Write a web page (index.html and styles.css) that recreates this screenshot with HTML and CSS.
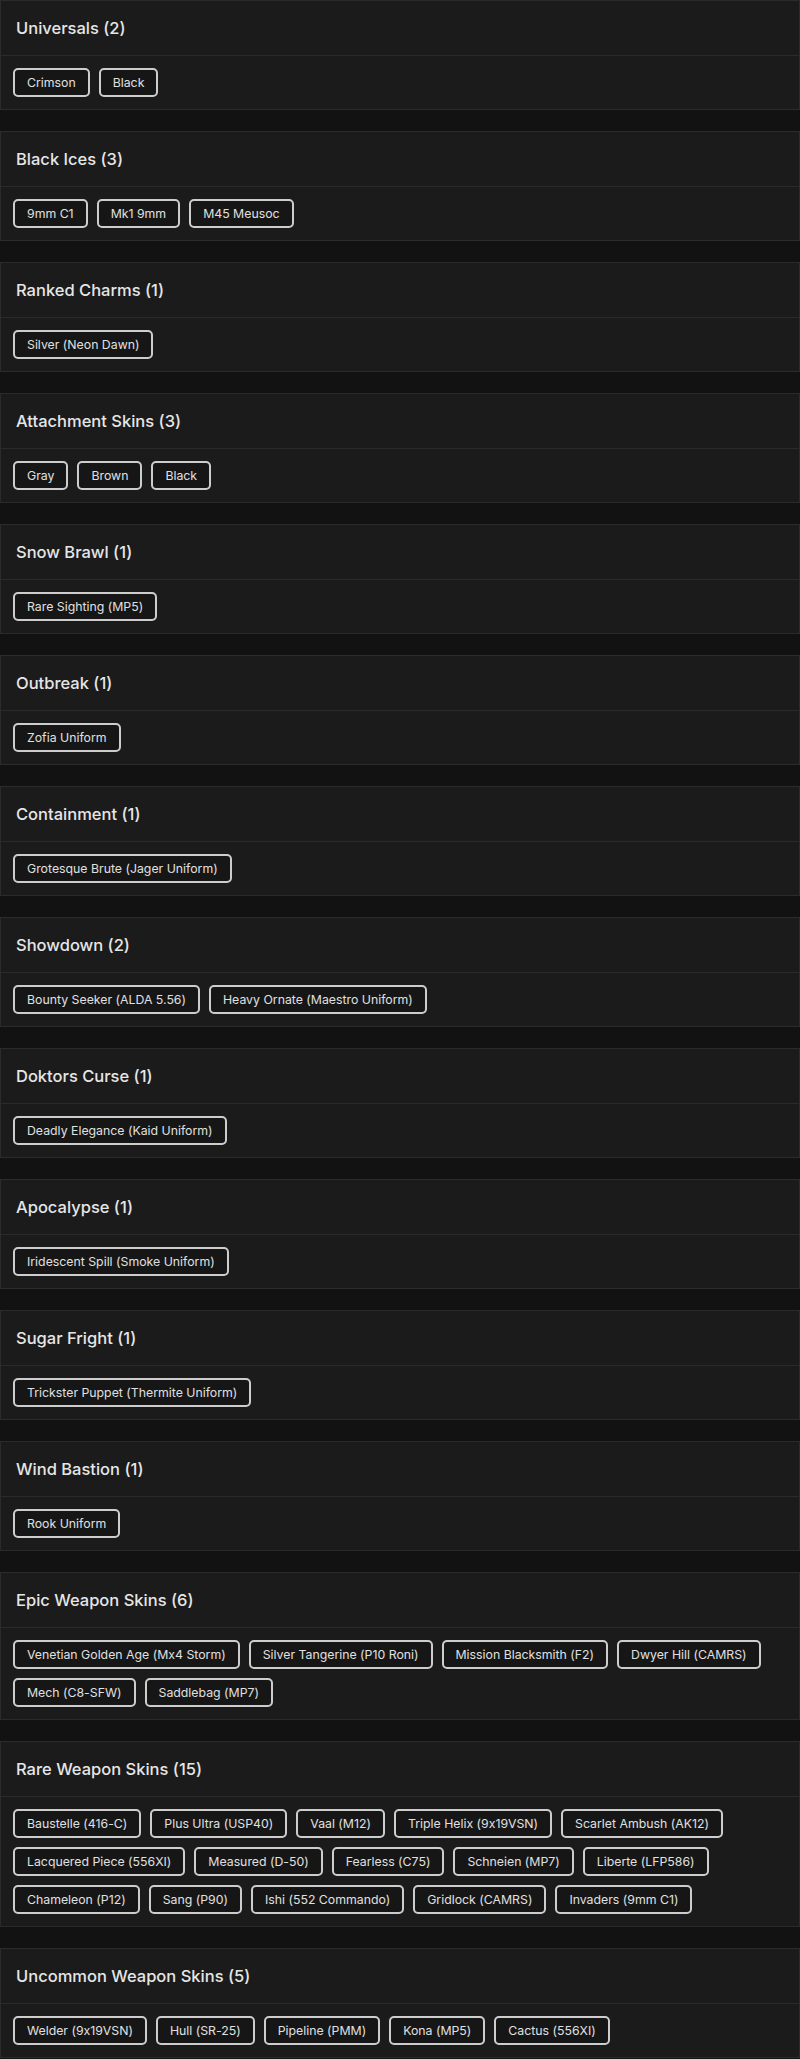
FILE: index.html
```html
<!DOCTYPE html>
<html lang="en">
<head>
<meta charset="utf-8">
<title>Collection</title>
<link rel="stylesheet" href="styles.css">
</head>
<body>
<main class="list">
  <section class="card">
    <h2 class="card-title">Universals (2)</h2>
    <div class="card-body"><span class="tag">Crimson</span><span class="tag">Black</span></div>
  </section>
  <section class="card">
    <h2 class="card-title">Black Ices (3)</h2>
    <div class="card-body"><span class="tag">9mm C1</span><span class="tag">Mk1 9mm</span><span class="tag">M45 Meusoc</span></div>
  </section>
  <section class="card">
    <h2 class="card-title">Ranked Charms (1)</h2>
    <div class="card-body"><span class="tag">Silver (Neon Dawn)</span></div>
  </section>
  <section class="card">
    <h2 class="card-title">Attachment Skins (3)</h2>
    <div class="card-body"><span class="tag">Gray</span><span class="tag">Brown</span><span class="tag">Black</span></div>
  </section>
  <section class="card">
    <h2 class="card-title">Snow Brawl (1)</h2>
    <div class="card-body"><span class="tag">Rare Sighting (MP5)</span></div>
  </section>
  <section class="card">
    <h2 class="card-title">Outbreak (1)</h2>
    <div class="card-body"><span class="tag">Zofia Uniform</span></div>
  </section>
  <section class="card">
    <h2 class="card-title">Containment (1)</h2>
    <div class="card-body"><span class="tag">Grotesque Brute (Jager Uniform)</span></div>
  </section>
  <section class="card">
    <h2 class="card-title">Showdown (2)</h2>
    <div class="card-body"><span class="tag">Bounty Seeker (ALDA 5.56)</span><span class="tag">Heavy Ornate (Maestro Uniform)</span></div>
  </section>
  <section class="card">
    <h2 class="card-title">Doktors Curse (1)</h2>
    <div class="card-body"><span class="tag">Deadly Elegance (Kaid Uniform)</span></div>
  </section>
  <section class="card">
    <h2 class="card-title">Apocalypse (1)</h2>
    <div class="card-body"><span class="tag">Iridescent Spill (Smoke Uniform)</span></div>
  </section>
  <section class="card">
    <h2 class="card-title">Sugar Fright (1)</h2>
    <div class="card-body"><span class="tag">Trickster Puppet (Thermite Uniform)</span></div>
  </section>
  <section class="card">
    <h2 class="card-title">Wind Bastion (1)</h2>
    <div class="card-body"><span class="tag">Rook Uniform</span></div>
  </section>
  <section class="card">
    <h2 class="card-title">Epic Weapon Skins (6)</h2>
    <div class="card-body"><span class="tag">Venetian Golden Age (Mx4 Storm)</span><span class="tag">Silver Tangerine (P10 Roni)</span><span class="tag">Mission Blacksmith (F2)</span><span class="tag">Dwyer Hill (CAMRS)</span><span class="tag">Mech (C8-SFW)</span><span class="tag">Saddlebag (MP7)</span></div>
  </section>
  <section class="card">
    <h2 class="card-title">Rare Weapon Skins (15)</h2>
    <div class="card-body"><span class="tag">Baustelle (416-C)</span><span class="tag">Plus Ultra (USP40)</span><span class="tag">Vaal (M12)</span><span class="tag">Triple Helix (9x19VSN)</span><span class="tag">Scarlet Ambush (AK12)</span><span class="tag">Lacquered Piece (556XI)</span><span class="tag">Measured (D-50)</span><span class="tag">Fearless (C75)</span><span class="tag">Schneien (MP7)</span><span class="tag">Liberte (LFP586)</span><span class="tag">Chameleon (P12)</span><span class="tag">Sang (P90)</span><span class="tag">Ishi (552 Commando)</span><span class="tag">Gridlock (CAMRS)</span><span class="tag">Invaders (9mm C1)</span></div>
  </section>
  <section class="card">
    <h2 class="card-title">Uncommon Weapon Skins (5)</h2>
    <div class="card-body"><span class="tag">Welder (9x19VSN)</span><span class="tag">Hull (SR-25)</span><span class="tag">Pipeline (PMM)</span><span class="tag">Kona (MP5)</span><span class="tag">Cactus (556XI)</span></div>
  </section>
</main>
</body>
</html>
```

FILE: styles.css
```css
html, body {
  margin: 0;
  padding: 0;
  background: #121212;
}

body {
  font-family: Inter, "Liberation Sans", sans-serif;
  font-feature-settings: "calt" 0;
  color: #e2e2e2;
}

.list {
  display: flex;
  flex-direction: column;
  gap: 21px;
}

.card {
  background: #1b1b1b;
  border: 1px solid #2b2b2b;
}

.card-title {
  margin: 0;
  height: 54px;
  padding: 0 15px;
  display: flex;
  align-items: center;
  border-bottom: 1px solid #2b2b2b;
  font-size: 16.5px;
  font-weight: 500;
  color: #e6e6e6;
}

.card-body {
  padding: 12px;
  display: flex;
  flex-wrap: wrap;
  gap: 9px;
}

.tag {
  box-sizing: border-box;
  height: 29px;
  line-height: 25px;
  padding: 0 12px;
  border: 2px solid #cdcdcd;
  border-radius: 5px;
  background: #161616;
  font-size: 12.3px;
  color: #e0e0e0;
  white-space: nowrap;
}
```
